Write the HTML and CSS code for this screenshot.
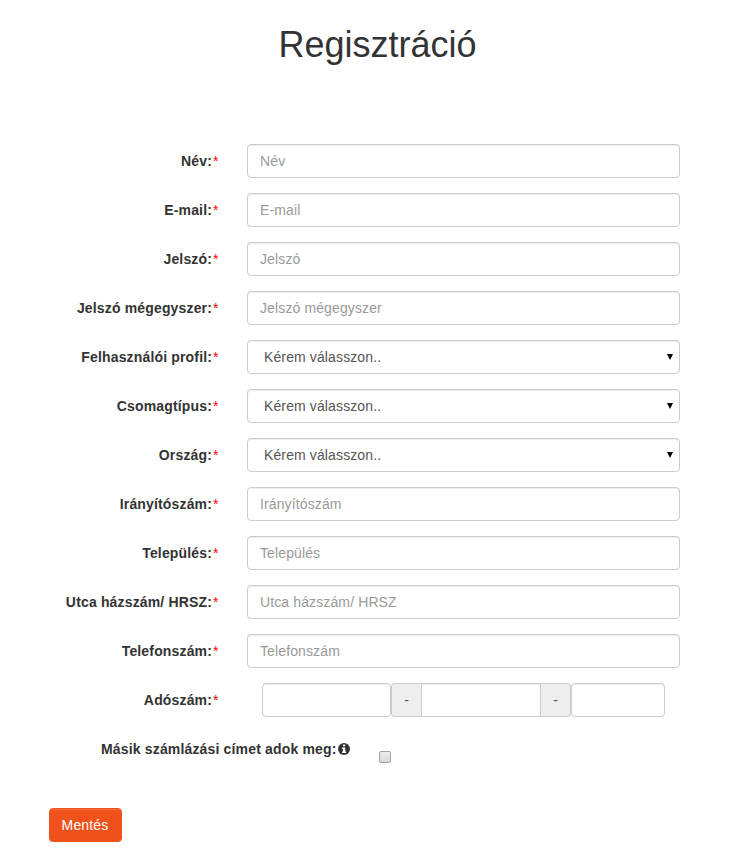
FILE: index.html
```html
<!DOCTYPE html>
<html lang="hu">
<head>
    <meta charset="UTF-8">
    <meta name="viewport" content="width=device-width, initial-scale=1.0">
    <title>Regisztráció</title>
    <link rel="stylesheet" href="styles.css">
</head>
<body>
    <h1>Regisztráció</h1>

    <form class="register-form">
        <div class="form-group">
            <label for="name"><span class="label-text">Név:</span><span class="required">*</span></label>
            <input type="text" id="name" class="form-control" placeholder="Név">
        </div>
        <div class="form-group">
            <label for="email"><span class="label-text">E-mail:</span><span class="required">*</span></label>
            <input type="text" id="email" class="form-control" placeholder="E-mail">
        </div>
        <div class="form-group">
            <label for="password"><span class="label-text">Jelszó:</span><span class="required">*</span></label>
            <input type="password" id="password" class="form-control" placeholder="Jelszó">
        </div>
        <div class="form-group">
            <label for="password2"><span class="label-text">Jelszó mégegyszer:</span><span class="required">*</span></label>
            <input type="password" id="password2" class="form-control" placeholder="Jelszó mégegyszer">
        </div>
        <div class="form-group">
            <label for="profile"><span class="label-text">Felhasználói profil:</span><span class="required">*</span></label>
            <div class="select-wrap">
                <select id="profile" class="form-control"><option>Kérem válasszon..</option></select>
            </div>
        </div>
        <div class="form-group">
            <label for="package"><span class="label-text">Csomagtípus:</span><span class="required">*</span></label>
            <div class="select-wrap">
                <select id="package" class="form-control"><option>Kérem válasszon..</option></select>
            </div>
        </div>
        <div class="form-group">
            <label for="country"><span class="label-text">Ország:</span><span class="required">*</span></label>
            <div class="select-wrap">
                <select id="country" class="form-control"><option>Kérem válasszon..</option></select>
            </div>
        </div>
        <div class="form-group">
            <label for="zip"><span class="label-text">Irányítószám:</span><span class="required">*</span></label>
            <input type="text" id="zip" class="form-control" placeholder="Irányítószám">
        </div>
        <div class="form-group">
            <label for="city"><span class="label-text">Település:</span><span class="required">*</span></label>
            <input type="text" id="city" class="form-control" placeholder="Település">
        </div>
        <div class="form-group">
            <label for="street"><span class="label-text">Utca házszám/ HRSZ:</span><span class="required">*</span></label>
            <input type="text" id="street" class="form-control" placeholder="Utca házszám/ HRSZ">
        </div>
        <div class="form-group">
            <label for="phone"><span class="label-text">Telefonszám:</span><span class="required">*</span></label>
            <input type="text" id="phone" class="form-control" placeholder="Telefonszám">
        </div>
        <div class="form-group">
            <label for="tax1"><span class="label-text">Adószám:</span><span class="required">*</span></label>
            <div class="tax-number">
                <input type="text" id="tax1" class="form-control tax-first">
                <span class="addon addon-left">-</span>
                <input type="text" class="form-control tax-middle">
                <span class="addon addon-right">-</span>
                <input type="text" class="form-control tax-last">
            </div>
        </div>
        <div class="form-group billing">
            <label for="billing"><span class="label-text">Másik számlázási címet adok meg:</span><svg class="info-icon" width="12" height="12" viewBox="0 0 12 12"><circle cx="6" cy="6" r="6" fill="#333"/><path d="M5 1.5h2.2v1.8H5zM4.1 4.5h3.1v4h.9v1.5H4.1V8.5H5V6h-.9z" fill="#fff"/></svg></label>
            <input type="checkbox" id="billing" class="checkbox">
        </div>

        <button type="button" class="btn-save">Mentés</button>
    </form>
</body>
</html>
```
FILE: styles.css
```css
* {
    box-sizing: border-box;
}

body {
    margin: 0;
    font-family: "Liberation Sans", Arial, sans-serif;
    font-size: 14px;
    line-height: 20px;
    color: #333;
    background-color: #fff;
}

h1 {
    margin: 25px 0 0 24px;
    font-size: 36px;
    font-weight: normal;
    line-height: 40px;
    text-align: center;
}

/* Form rows */
.register-form {
    padding: 79px 51px 0 49px;
}

.form-group {
    display: flex;
    height: 34px;
    margin-bottom: 15px;
}

label {
    width: 170px;
    margin-right: 28px;
    padding-top: 7px;
    flex-shrink: 0;
    font-weight: bold;
    text-align: right;
    white-space: nowrap;
}

.label-text {
    letter-spacing: 0.16px;
}

.required {
    margin-left: 1px;
    margin-right: 0.5px;
    font-weight: normal;
    color: red;
}

.form-control {
    display: block;
    width: 100%;
    height: 34px;
    padding: 6px 12px;
    font-family: inherit;
    font-size: 14px;
    line-height: 20px;
    letter-spacing: 0.12px;
    color: #555;
    background-color: #fff;
    border: 1px solid #ccc;
    border-radius: 4px;
    box-shadow: inset 0 1px 1px rgba(0,0,0,0.075);
}

.form-control::placeholder {
    color: #999;
    opacity: 1;
}

.select-wrap {
    position: relative;
    width: 100%;
}

select.form-control {
    padding-left: 16px;
    appearance: none;
}

.select-wrap::after {
    content: "";
    position: absolute;
    top: 14px;
    right: 7px;
    border: 3px solid transparent;
    border-top: 6px solid #000;
    border-bottom: 0;
    pointer-events: none;
}

/* Tax number */
.tax-number {
    display: flex;
    width: 100%;
    padding: 0 15px;
}

.tax-first {
    width: 129px;
}

.tax-middle {
    width: 120px;
    border-radius: 0;
}

.tax-last {
    width: 94px;
}

.addon {
    width: 30px;
    padding-top: 6px;
    flex-shrink: 0;
    color: #555;
    text-align: center;
    background-color: #eee;
    border: 1px solid #ccc;
}

.addon-left {
    border-right: 0;
    border-radius: 4px 0 0 4px;
}

.addon-right {
    border-left: 0;
    border-radius: 0 4px 4px 0;
}

/* Billing address */
.billing label {
    width: 301px;
    margin-right: 29px;
}

.info-icon {
    margin-left: 1px;
    margin-right: 0.5px;
    vertical-align: -1px;
}

.checkbox {
    width: 12px;
    height: 12px;
    margin: 19px 0 0;
    appearance: none;
    background: linear-gradient(#eee, #d8d8d8);
    border: 1px solid #a5a5a5;
    border-radius: 2px;
}

.btn-save {
    display: block;
    width: 73px;
    height: 34px;
    margin-top: 42px;
    padding: 6px 0;
    font-family: inherit;
    font-size: 14px;
    line-height: 20px;
    letter-spacing: 0.15px;
    text-indent: -1px;
    color: #fff;
    background-color: #f1511b;
    border: 1px solid #f1511b;
    border-radius: 4px;
    box-shadow: inset 0 1px 0 rgba(255,255,255,0.15), 0 1px 1px rgba(0,0,0,0.075);
}
```
